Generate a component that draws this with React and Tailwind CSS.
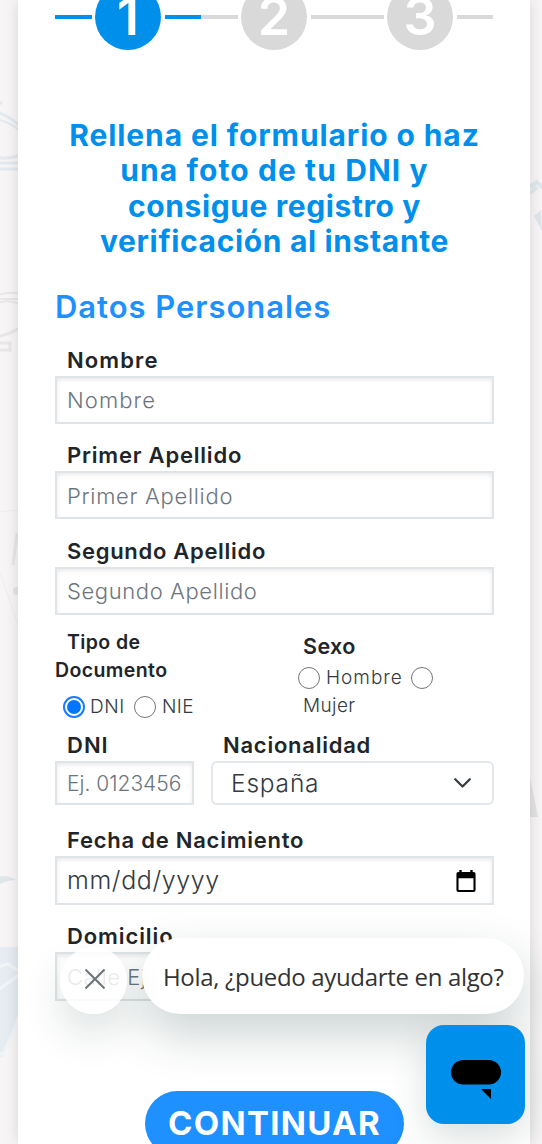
import React, { useState } from 'react';

const labelClass = "block h-8 leading-8 pl-3 text-[22px] font-semibold text-[#212529] whitespace-nowrap";
const inputClass = "block w-full border-2 border-[#dfe4e8] bg-white px-[10px] pt-px font-light text-[#212529] placeholder:text-[#6c757d] placeholder:opacity-100 shadow-[inset_0_2px_4px_rgba(0,0,0,0.09)] outline-none";

const steps = [
    { number: 1, color: 'bg-[#0090ec]' },
    { number: 2, color: 'bg-[#d9d9d9]' },
    { number: 3, color: 'bg-[#d9d9d9]' },
];

const Stepper = () => (
    <div className="flex -mt-[16px] mr-px h-[66px]">
        {steps.map((step) => (
            <div key={step.number} className="flex-1 flex items-center">
                <div className={`flex-1 h-[4.5px] ${step.color}`} />
                <div className={`w-[66px] h-[66px] mx-[3.5px] rounded-full flex items-center justify-center text-white text-[52px] leading-none font-semibold ${step.color}`}>
                    {step.number}
                </div>
                <div className={`flex-1 h-[4.5px] ${step.color}`} />
            </div>
        ))}
    </div>
);

const Radio = ({ checked, onClick }) => (
    <button
        type="button"
        role="radio"
        aria-checked={checked}
        onClick={onClick}
        className={`w-[22px] h-[22px] shrink-0 rounded-full bg-white flex items-center justify-center ${checked ? 'border-2 border-[#1a7dff]' : 'border-[1.5px] border-[#767676]'}`}
    >
        {checked && <span className="w-[14px] h-[14px] rounded-full bg-[#0075ff]" />}
    </button>
);

// Faint doodles that show on both sides of the card
const Background = () => (
    <svg className="absolute inset-0 opacity-75" width="542" height="1144" viewBox="0 0 542 1144" fill="none">
        <g stroke="#dbe6ed" strokeWidth="3">
            <path d="M-4 106 L2 102 M-4 112 Q8 115 20 126" />
            <path d="M-4 119 Q10 122 20 131" strokeWidth="2" />
            <path d="M-4 157 Q8 160 20 155" />
            <path d="M0 163 H20 M0 169 H20" />
        </g>
        <g stroke="#e4e4e4" strokeWidth="2">
            <path d="M-2 295 Q8 291 20 294 M-2 303 Q8 299 20 304 M0 299 H20" />
            <path d="M-2 337 Q10 334 20 328 M-2 343 H10 V350 H0" strokeWidth="3" />
            <path d="M-2 512 L20 510 M0 573 L20 630" stroke="#ececec" strokeWidth="1" />
            <path d="M17 533 L13 565" strokeWidth="3" />
            <circle cx="17" cy="591" r="4" fill="#e0e0e0" stroke="none" />
        </g>
        <path d="M-2 877 Q6 874 16 880 Q8 880 -2 885 Z" fill="#d8e3e8" />
        <path d="M0 947 H20 V1008 L4 1056 L0 1057 Z" fill="#dfeaf1" />
        <path d="M-2 967 L8 964 L20 972 M-2 990 L20 974 M3 1055 L20 1016 M-2 1052 L3 1055" stroke="#f0f6f9" strokeWidth="3" />
        <path d="M530 187 L537 182 L543 188 M530 193 L537 187" stroke="#d9e5ea" strokeWidth="4" />
        <path d="M534 216 L541 210 L542 231 Z" fill="#d7e3ea" />
        <path d="M530 777 L538 817 H530 Z" fill="#dedede" />
    </svg>
);

const ChatWidget = () => (
    <>
        <div className="absolute left-[142px] top-[938px] w-[382px] h-[76px] rounded-[38px] bg-white shadow-[0_20px_48px_rgba(20,50,50,0.22)] flex items-center pl-[21px] pt-px">
            <p className="font-['Open_Sans',sans-serif] text-[24px] leading-8 tracking-[-0.33px] text-[#333] whitespace-nowrap">Hola, ¿puedo ayudarte en algo?</p>
        </div>
        <button type="button" className="absolute left-[60px] top-[947px] w-[67px] h-[67px] rounded-full bg-white/85 shadow-[0_20px_40px_rgba(20,50,50,0.14)] flex items-center justify-center pb-[4px] pl-[2px]">
            <svg width="20" height="20" viewBox="0 0 20 20" stroke="#6c7479" strokeWidth="2">
                <path d="M0.5 0.5 L19.5 19.5 M19.5 0.5 L0.5 19.5" />
            </svg>
        </button>
        <button type="button" className="absolute left-[426px] top-[1025px] w-[99px] h-[99px] rounded-[18px] bg-[#0090ec] shadow-[0_14px_36px_rgba(20,50,50,0.15)] flex items-start justify-center pt-[35px]">
            <svg width="50" height="40" viewBox="0 0 50 40" fill="#000">
                <rect width="50" height="24.5" rx="12.25" />
                <path d="M30 29 H40 V39 Z" />
            </svg>
        </button>
    </>
);

export default function App() {
    const [documento, setDocumento] = useState('DNI');
    const [sexo, setSexo] = useState('');

    return (
        <div className="relative w-[542px] h-[1144px] overflow-hidden bg-[#f7f5f6] font-['Inter',sans-serif] pl-[18px] pr-3">
            <Background />
            <main className="relative flow-root h-full bg-white pl-[37px] pr-9 shadow-[0_0_14px_rgba(0,0,0,0.13)]">
                <Stepper />

                <h1 className="mt-[68px] h-[141px] text-center text-[30px] leading-[35.4px] font-bold text-[#0090ec] whitespace-nowrap">
                    <span className="block tracking-[0.9px]">Rellena el formulario o haz</span>
                    <span className="block tracking-[1.1px]">una foto de tu DNI y</span>
                    <span className="block tracking-[0.6px]">consigue registro y</span>
                    <span className="block tracking-[0.65px]">verificación al instante</span>
                </h1>

                <h2 className="mt-[29px] h-9 text-[31px] leading-[37px] font-semibold text-[#1e90ff] tracking-[0.95px]">Datos Personales</h2>

                <div className="mt-[19.5px]">
                    <label className={`${labelClass} tracking-[1.1px]`}>Nombre</label>
                    <input className={`${inputClass} h-12 text-[22px] tracking-[1.1px]`} placeholder="Nombre" />
                </div>
                <div className="mt-[15.5px]">
                    <label className={`${labelClass} tracking-[0.8px]`}>Primer Apellido</label>
                    <input className={`${inputClass} h-12 text-[22px] tracking-[0.7px]`} placeholder="Primer Apellido" />
                </div>
                <div className="mt-[15.5px]">
                    <label className={`${labelClass} tracking-[0.7px]`}>Segundo Apellido</label>
                    <input className={`${inputClass} h-12 text-[22px] tracking-[0.6px]`} placeholder="Segundo Apellido" />
                </div>

                <div className="flex h-[114.5px] text-[19px] leading-7 font-light text-[#333a40]">
                    <div className="w-[243px] pt-[13.5px]">
                        <p className="w-[125px] indent-3 text-[19.5px] font-semibold tracking-[0.4px] text-[#212529]">Tipo de Documento</p>
                        <div className="mt-[9px] pl-2 flex items-center">
                            <Radio checked={documento === 'DNI'} onClick={() => setDocumento('DNI')} />
                            <span className="w-[49px] pl-[5px] tracking-[0.6px]">DNI</span>
                            <Radio checked={documento === 'NIE'} onClick={() => setDocumento('NIE')} />
                            <span className="pl-[6px] tracking-[0.4px]">NIE</span>
                        </div>
                    </div>
                    <div className="pt-[15.5px]">
                        <p className="h-8 leading-8 pl-[5px] text-[21.5px] font-semibold tracking-[0.4px] text-[#212529]">Sexo</p>
                        <div className="mt-[2px] flex items-center">
                            <Radio checked={sexo === 'H'} onClick={() => setSexo('H')} />
                            <span className="w-[91px] pl-[6px] tracking-[1px]">Hombre</span>
                            <Radio checked={sexo === 'M'} onClick={() => setSexo('M')} />
                        </div>
                        <span className="block pl-[5px] tracking-[0.4px]">Mujer</span>
                    </div>
                </div>

                <div className="flex gap-[17px]">
                    <div className="w-[139px]">
                        <label className={`${labelClass} tracking-[1px]`}>DNI</label>
                        <input className={`${inputClass} h-[44px] text-[21px]`} placeholder="Ej. 0123456" />
                    </div>
                    <div className="flex-1">
                        <label className={`${labelClass} tracking-[0.75px]`}>Nacionalidad</label>
                        <div className="h-[44px] rounded-md border-2 border-[#e3e7eb] flex items-center justify-between pl-[18px] pr-[21px] text-[24.5px] font-light text-[#333a40]">
                            <span className="tracking-[0.8px]">España</span>
                            <svg width="17" height="10" viewBox="0 0 17 10" fill="none" stroke="#343a40" strokeWidth="2.2" strokeLinecap="round" strokeLinejoin="round">
                                <path d="M1.2 1.2 L8.5 8.5 L15.8 1.2" />
                            </svg>
                        </div>
                    </div>
                </div>

                <div className="mt-[19px]">
                    <label className={`${labelClass} tracking-[0.75px]`}>Fecha de Nacimiento</label>
                    <div className={`${inputClass} h-[49px] flex items-center justify-between`}>
                        <span className="text-[25px] tracking-[0.6px] text-[#333a40]">mm/dd/yyyy</span>
                        <svg className="mr-[6px] mb-px" width="20" height="22" viewBox="0 0 20 23" fill="#000">
                            <path fillRule="evenodd" d="M3 0 H5.5 V2 H14.5 V0 H17 V2 H18 Q20 2 20 4 V21 Q20 23 18 23 H2 Q0 23 0 21 V4 Q0 2 2 2 H3 Z M2.2 8.5 V20.8 H17.8 V8.5 Z" />
                        </svg>
                    </div>
                </div>

                <div className="mt-[14.5px]">
                    <label className={`${labelClass} tracking-[0.9px]`}>Domicilio</label>
                    <input className={`${inputClass} h-[49px] text-[22px] tracking-[0.5px]`} placeholder="Calle Ejemplo" />
                </div>

                <button type="button" className="mt-[90px] ml-[90px] w-[259px] h-[65px] rounded-[33px] bg-[#1e90ff] text-white text-[33px] leading-none font-bold tracking-[1.3px]">
                    CONTINUAR
                </button>
            </main>
            <ChatWidget />
        </div>
    );
}
